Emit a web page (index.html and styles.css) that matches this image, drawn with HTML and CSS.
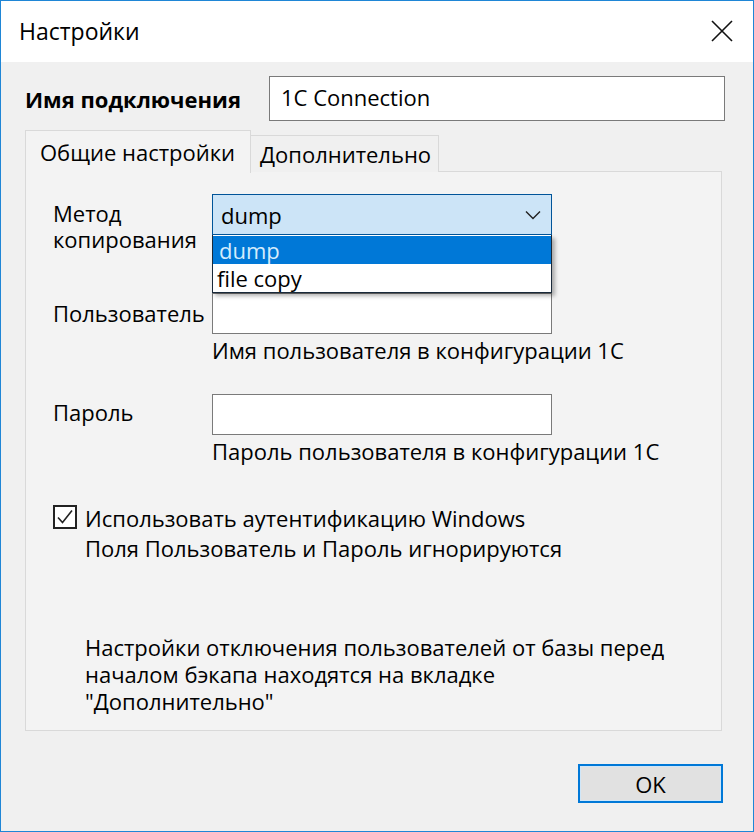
FILE: index.html
```html
<!DOCTYPE html>
<html lang="ru">
<head>
<meta charset="utf-8">
<title>Настройки</title>
<link rel="stylesheet" href="styles.css">
</head>
<body>
<div class="window">
  <div class="titlebar">
    <span class="title">Настройки</span>
    <svg class="close" width="22" height="22" viewBox="0 0 22 22"><path d="M1 1 L21 21 M21 1 L1 21" stroke="#111" stroke-width="1.6" fill="none"/></svg>
  </div>
  <div class="content">
    <div class="name-row">
      <div class="name-label">Имя подключения</div>
      <div class="textbox name-input">1C Connection</div>
    </div>
    <div class="tabs">
      <div class="tab active">Общие настройки</div>
      <div class="tab">Дополнительно</div>
    </div>
    <div class="panel">
      <div class="row row-method">
        <div class="label label-method">Метод<br>копирования</div>
        <div class="control">
          <div class="combo">
            <span>dump</span>
            <svg class="chev" width="16" height="10" viewBox="0 0 16 10"><path d="M1 1.5 L8 8.5 L15 1.5" stroke="#222" stroke-width="1.4" fill="none"/></svg>
          </div>
          <div class="dropdown">
            <div class="item selected">dump</div>
            <div class="item">file copy</div>
          </div>
        </div>
      </div>
      <div class="row row-user">
        <div class="label label-user">Пользователь</div>
        <div class="control">
          <div class="textbox field"></div>
          <div class="hint">Имя пользователя в конфигурации 1С</div>
        </div>
      </div>
      <div class="row row-pass">
        <div class="label label-pass">Пароль</div>
        <div class="control">
          <div class="textbox field"></div>
          <div class="hint">Пароль пользователя в конфигурации 1С</div>
        </div>
      </div>
      <div class="check-row">
        <svg class="checkbox" width="24" height="24" viewBox="0 0 24 24"><rect x="1" y="1" width="22" height="22" fill="#fff" stroke="#222" stroke-width="2"/><path d="M5 12.5 L9.5 17.5 L19 5.5" stroke="#222" stroke-width="1.6" fill="none"/></svg>
        <div class="check-text">
          <div>Использовать аутентификацию Windows</div>
          <div class="check-sub">Поля Пользователь и Пароль игнорируются</div>
        </div>
      </div>
      <div class="note">Настройки отключения пользователей от базы перед<br>началом бэкапа находятся на вкладке<br>"Дополнительно"</div>
    </div>
    <div class="footer">
      <button class="ok">OK</button>
    </div>
  </div>
</div>
</body>
</html>
```

FILE: styles.css
```css
html, body {
  margin: 0;
  padding: 0;
}
body {
  font-family: "Open Sans", "Noto Sans", sans-serif;
  font-size: 22px;
  color: #000;
  background: #f0f0f0;
}
.window {
  width: 754px;
  height: 832px;
  box-sizing: border-box;
  border: 1px solid #1f86d6;
  background: #f0f0f0;
  display: flex;
  flex-direction: column;
}
.titlebar {
  height: 61px;
  background: #fff;
  display: flex;
  align-items: center;
  justify-content: space-between;
  padding: 0 20px 0 18px;
  flex: none;
}
.title {
  font-size: 23px;
  line-height: 28px;
  margin-top: -1px;
}
.close {
  display: block;
  margin-top: -2px;
}
.content {
  padding: 14px 0 0 24px;
}
.name-row {
  display: flex;
  align-items: center;
}
.name-label {
  width: 244px;
  font-weight: bold;
  line-height: 28px;
}
.textbox {
  box-sizing: border-box;
  background: #fff;
  border: 1px solid #7a7a7a;
}
.name-input {
  width: 456px;
  height: 45px;
  padding: 0 11px;
  line-height: 41px;
}
.tabs {
  display: flex;
  align-items: flex-end;
  margin-top: 9px;
  height: 42px;
  position: relative;
  z-index: 1;
}
.tab {
  box-sizing: border-box;
  height: 37px;
  border: 1px solid #d9d9d9;
  border-bottom: none;
  background: #f0f0f0;
  padding: 0 9px 0 9px;
  line-height: 37px;
  white-space: nowrap;
}
.tab.active {
  width: 226px;
  background: #f3f3f3;
  padding: 0 14px;
  line-height: 42px;
  margin-bottom: -1px;
  height: 43px;
}
.tab + .tab {
  border-left: none;
  width: 188px;
}
.panel {
  box-sizing: border-box;
  width: 697px;
  height: 560px;
  border: 1px solid #d9d9d9;
  background: #f3f3f3;
  padding: 22px 0 0 27px;
  margin-top: -1px;
}
.row {
  display: flex;
}
.label {
  width: 159px;
  flex: none;
  line-height: 26px;
  white-space: nowrap;
}
.label-method { padding-top: 6px; }
.label-user { padding-top: 7px; }
.label-pass { padding-top: 5px; }
.control {
  position: relative;
  width: 340px;
}
.combo {
  box-sizing: border-box;
  height: 41px;
  background: #cce4f7;
  border: 1px solid #005499;
  display: flex;
  align-items: center;
  justify-content: space-between;
  padding: 0 10px 0 8px;
}
.chev { display: block; }
.dropdown {
  position: absolute;
  left: 0;
  top: 41px;
  width: 340px;
  box-sizing: border-box;
  border: 1px solid #1a2a3a;
  border-top: none;
  background: #fff;
  box-shadow: 3px 3px 4px rgba(0, 0, 0, 0.3);
  padding-top: 1px;
  z-index: 2;
}
.item {
  height: 28px;
  line-height: 28px;
  padding: 0 4px;
}
.item.selected {
  background: #0078d7;
  color: #d4ecfc;
  padding: 0 6px;
}
.row-user { margin-top: 41px; }
.row-pass { margin-top: 31px; }
.field {
  height: 41px;
}
.hint {
  line-height: 26px;
  margin-top: 3px;
  white-space: nowrap;
}
.check-row {
  display: flex;
  align-items: flex-start;
  margin-top: 41px;
}
.checkbox {
  display: block;
  flex: none;
  margin: 0 8px 0 0;
}
.check-text {
  line-height: 26px;
  white-space: nowrap;
}
.check-sub {
  margin-top: 4px;
}
.note {
  margin: 73px 0 0 32px;
  line-height: 27px;
}
.footer {
  display: flex;
  justify-content: flex-end;
  padding-right: 30px;
  margin-top: 33px;
}
.ok {
  box-sizing: border-box;
  width: 145px;
  height: 39px;
  border: 2px solid #0078d7;
  box-shadow: inset 0 0 0 1px #cfe6f8;
  background: #e1e1e1;
  font-family: inherit;
  font-size: 22px;
  color: #000;
  padding: 0;
}
```
